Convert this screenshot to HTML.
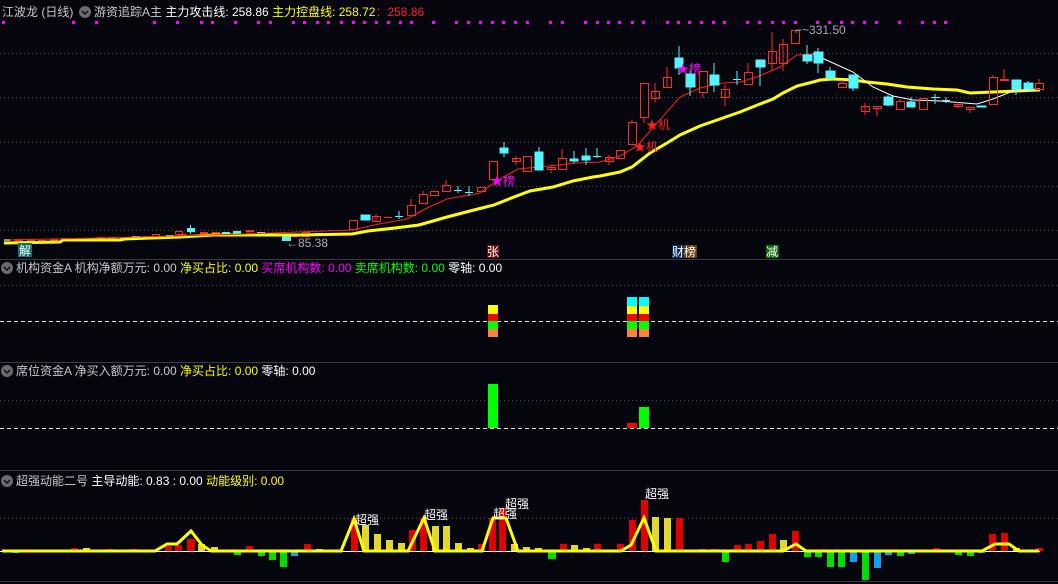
<!DOCTYPE html>
<html><head><meta charset="utf-8">
<style>
html,body{margin:0;padding:0;background:#05050e;width:1058px;height:584px;overflow:hidden}
svg{display:block}
text{font-family:"Liberation Sans","Noto Sans CJK SC",sans-serif;font-size:12px}
</style></head><body>
<svg width="1058" height="584" viewBox="0 0 1058 584" xmlns="http://www.w3.org/2000/svg">
<rect width="1058" height="584" fill="#05050e"/>
<!-- separators -->
<g stroke="#3a3a3e" stroke-width="1">
<line x1="0" y1="259.5" x2="1058" y2="259.5"/>
<line x1="0" y1="362.5" x2="1058" y2="362.5"/>
<line x1="0" y1="470.5" x2="1058" y2="470.5"/>
<line x1="0" y1="581.5" x2="1058" y2="581.5"/>
</g>
<!-- grid -->
<g stroke="#4a4a55" stroke-width="1" stroke-dasharray="1,3">
<line x1="0" y1="53.5" x2="1058" y2="53.5"/>
<line x1="0" y1="97.5" x2="1058" y2="97.5"/>
<line x1="0" y1="142.5" x2="1058" y2="142.5"/>
<line x1="0" y1="186.5" x2="1058" y2="186.5"/>
<line x1="0" y1="230.5" x2="1058" y2="230.5"/>
<line x1="0" y1="285.5" x2="1058" y2="285.5"/>
<line x1="0" y1="400.5" x2="1058" y2="400.5"/>
<line x1="0" y1="518.5" x2="1058" y2="518.5"/>
</g>
<g stroke="#e0e0e0" stroke-width="1" stroke-dasharray="4,3">
<line x1="0" y1="321.5" x2="1058" y2="321.5"/>
<line x1="0" y1="428.5" x2="1058" y2="428.5"/>
</g>
<!-- magenta dots -->
<g fill="#ff00ff">
<rect x="2" y="21" width="3" height="3"/><rect x="72" y="21" width="3" height="3"/><rect x="95" y="21" width="3" height="3"/><rect x="153" y="21" width="3" height="3"/><rect x="176" y="21" width="3" height="3"/><rect x="200" y="21" width="3" height="3"/><rect x="211" y="21" width="3" height="3"/><rect x="234" y="21" width="3" height="3"/><rect x="257" y="21" width="3" height="3"/><rect x="269" y="21" width="3" height="3"/><rect x="292" y="21" width="3" height="3"/><rect x="303" y="21" width="3" height="3"/><rect x="316" y="21" width="3" height="3"/><rect x="327" y="21" width="3" height="3"/><rect x="340" y="21" width="3" height="3"/><rect x="352" y="21" width="3" height="3"/><rect x="363" y="21" width="3" height="3"/><rect x="375" y="21" width="3" height="3"/><rect x="387" y="21" width="3" height="3"/><rect x="399" y="21" width="3" height="3"/><rect x="410" y="21" width="3" height="3"/><rect x="432" y="21" width="3" height="3"/><rect x="455" y="21" width="3" height="3"/><rect x="467" y="21" width="3" height="3"/><rect x="479" y="21" width="3" height="3"/><rect x="491" y="21" width="3" height="3"/><rect x="502" y="21" width="3" height="3"/><rect x="514" y="21" width="3" height="3"/><rect x="526" y="21" width="3" height="3"/><rect x="549" y="21" width="3" height="3"/><rect x="561" y="21" width="3" height="3"/><rect x="584" y="21" width="3" height="3"/><rect x="596" y="21" width="3" height="3"/><rect x="607" y="21" width="3" height="3"/><rect x="618" y="21" width="3" height="3"/><rect x="631" y="21" width="3" height="3"/><rect x="642" y="21" width="3" height="3"/><rect x="666" y="21" width="3" height="3"/><rect x="677" y="21" width="3" height="3"/><rect x="688" y="21" width="3" height="3"/><rect x="700" y="21" width="3" height="3"/><rect x="712" y="21" width="3" height="3"/><rect x="723" y="21" width="3" height="3"/><rect x="746" y="21" width="3" height="3"/><rect x="758" y="21" width="3" height="3"/><rect x="771" y="21" width="3" height="3"/><rect x="782" y="21" width="3" height="3"/><rect x="794" y="21" width="3" height="3"/><rect x="816" y="21" width="3" height="3"/><rect x="828" y="21" width="3" height="3"/><rect x="840" y="21" width="3" height="3"/><rect x="851" y="21" width="3" height="3"/><rect x="863" y="21" width="3" height="3"/><rect x="875" y="21" width="3" height="3"/><rect x="898" y="21" width="3" height="3"/><rect x="921" y="21" width="3" height="3"/><rect x="933" y="21" width="3" height="3"/><rect x="944" y="21" width="3" height="3"/>
</g>
<!-- early small candles -->
<g fill="#ff2a2a">
<rect x="15" y="239" width="8" height="2"/><rect x="27" y="239" width="8" height="2"/><rect x="38" y="240" width="8" height="2"/><rect x="50" y="239" width="8" height="2"/><rect x="62" y="238" width="8" height="2"/><rect x="73" y="238" width="8" height="2"/><rect x="97" y="237" width="8" height="2"/><rect x="108" y="237" width="8" height="2"/><rect x="120" y="237" width="8" height="2"/><rect x="143" y="236" width="8" height="2"/><rect x="155" y="236" width="8" height="2"/><rect x="178" y="234" width="8" height="2"/><rect x="200" y="232" width="8" height="3"/><rect x="212" y="232" width="8" height="2"/><rect x="246" y="230" width="8" height="2"/>
</g>
<g fill="#54f5ff">
<rect x="4" y="239" width="6" height="2"/><rect x="85" y="238" width="8" height="1"/><rect x="132" y="236" width="8" height="2"/><rect x="166" y="235" width="8" height="1"/><rect x="187" y="228" width="8" height="4"/><rect x="190" y="225" width="1" height="9"/><rect x="222" y="232" width="8" height="2"/><rect x="233" y="231" width="8" height="3"/><rect x="257" y="232" width="8" height="2"/><rect x="268" y="235" width="8" height="1"/><rect x="282" y="236" width="9" height="5"/><rect x="315" y="233" width="8" height="1"/><rect x="338" y="233" width="8" height="1"/>
</g>
<g fill="none" stroke="#ff2a2a" stroke-width="1">
<rect x="152.5" y="234.5" width="7" height="3"/><rect x="175.5" y="231.5" width="7" height="3"/><rect x="302.5" y="232.5" width="7" height="4"/><rect x="246.5" y="233.5" width="7" height="2"/><rect x="291.5" y="234.5" width="7" height="2"/>
</g>
<!-- moving averages -->
<polyline fill="none" stroke="#ffff00" stroke-width="3" points="4,243 60,242 63,240 120,240 125,239 180,237 213,235 300,235 352,234 368,231 395,228 419,225 447,217 474,210 494,205 514,197 530,191 553,187 573,181 593,177 600,176 620,172 632,167 650,153 667,143 680,135 700,126 720,119 740,112 760,104 773,99 783,93 797,86 813,82 820,80 833,79 853,80 867,82 887,84 907,87 933,89 957,90 970,93 993,92 1017,91 1040,90"/>
<polyline fill="none" stroke="#ff1e1e" stroke-width="1" points="4,240 99,238 245,234 352,230 379,224 407,219 427,208 447,199 480,193 498,180 518,169 538,167 577,163 600,162 620,156 637,146 680,97 700,88 723,83 740,82 757,77 780,67 797,55 813,54"/>
<polyline fill="none" stroke="#ffffff" stroke-width="1" points="813,54 833,63 853,72 873,87 893,96 913,100 940,101 977,104 993,99 1013,91 1040,89"/>
<!-- red candles (hollow) -->
<g fill="none" stroke="#ff2a2a" stroke-width="1">
<rect x="349.5" y="220.5" width="8" height="9"/>
<line x1="376" y1="214" x2="376" y2="222"/><rect x="372.5" y="216.5" width="8" height="5"/>
<line x1="384" y1="217.5" x2="392" y2="217.5"/>
<line x1="411" y1="199" x2="411" y2="205"/><rect x="407.5" y="205.5" width="8" height="10"/>
<line x1="423" y1="191" x2="423" y2="194"/><rect x="419.5" y="194.5" width="8" height="9"/>
<rect x="430.5" y="191.5" width="8" height="4"/>
<line x1="446" y1="180" x2="446" y2="185"/><rect x="442.5" y="185.5" width="8" height="6"/>
<rect x="477.5" y="187.5" width="8" height="4"/>
<rect x="489.5" y="161.5" width="8" height="18"/>
<line x1="516" y1="156" x2="516" y2="165"/><rect x="512.5" y="158.5" width="8" height="3"/>
<rect x="523.5" y="156.5" width="8" height="15"/>
<line x1="551" y1="166" x2="551" y2="173"/><rect x="547.5" y="167.5" width="8" height="2"/>
<line x1="562" y1="149" x2="562" y2="158"/><rect x="558.5" y="158.5" width="8" height="11"/>
<line x1="609" y1="155" x2="609" y2="165"/><rect x="605.5" y="157.5" width="8" height="4"/>
<rect x="616.5" y="150.5" width="8" height="8"/>
<line x1="632" y1="120" x2="632" y2="122"/><rect x="628.5" y="122.5" width="8" height="22"/>
<line x1="644" y1="117" x2="644" y2="123"/><rect x="640.5" y="83.5" width="8" height="34"/>
<line x1="655" y1="83" x2="655" y2="102"/><rect x="651.5" y="91.5" width="8" height="7"/>
<line x1="667" y1="67" x2="667" y2="88"/><rect x="663.5" y="77.5" width="8" height="10"/>
<line x1="703" y1="92" x2="703" y2="98"/><rect x="699.5" y="71.5" width="8" height="21"/>
<line x1="725" y1="85" x2="725" y2="106"/><rect x="721.5" y="89.5" width="8" height="8"/>
<line x1="748" y1="63" x2="748" y2="72"/><rect x="744.5" y="72.5" width="8" height="12"/>
<line x1="772" y1="32" x2="772" y2="70"/><rect x="768.5" y="51.5" width="8" height="12"/>
<line x1="783" y1="39" x2="783" y2="71"/><rect x="779.5" y="44.5" width="8" height="19"/>
<rect x="791.5" y="30.5" width="8" height="13"/>
<line x1="842" y1="80" x2="842" y2="83"/><rect x="838.5" y="83.5" width="8" height="4"/>
<line x1="865" y1="103" x2="865" y2="115"/><rect x="861.5" y="106.5" width="8" height="5"/>
<line x1="877" y1="108" x2="877" y2="116"/><rect x="873.5" y="106.5" width="8" height="2"/>
<line x1="900" y1="99" x2="900" y2="101"/><rect x="896.5" y="101.5" width="8" height="8"/>
<rect x="919.5" y="98.5" width="8" height="11"/>
<line x1="958" y1="102" x2="958" y2="108"/><rect x="954.5" y="104.5" width="8" height="2"/>
<line x1="970" y1="109" x2="970" y2="113"/><rect x="966.5" y="107.5" width="8" height="2"/>
<line x1="993" y1="75" x2="993" y2="77"/><rect x="989.5" y="77.5" width="8" height="27"/>
<line x1="1004" y1="69" x2="1004" y2="80"/><rect x="1000.5" y="79.5" width="8" height="1"/>
<line x1="1039" y1="79" x2="1039" y2="83"/><rect x="1035.5" y="83.5" width="8" height="6"/>
</g>
<!-- cyan candles -->
<g fill="#54f5ff" stroke="#54f5ff" stroke-width="1">
<rect x="361" y="215" width="9" height="5"/>
<line x1="399" y1="211" x2="399" y2="219"/><line x1="395" y1="216.5" x2="403" y2="216.5"/>
<line x1="458" y1="186" x2="458" y2="193"/><line x1="454" y1="190.5" x2="462" y2="190.5"/>
<line x1="469" y1="186" x2="469" y2="196"/><line x1="465" y1="192.5" x2="473" y2="192.5"/>
<line x1="504" y1="142" x2="504" y2="157"/><rect x="500" y="148" width="8" height="5"/>
<line x1="539" y1="147" x2="539" y2="170"/><rect x="535" y="152" width="8" height="18"/>
<line x1="574" y1="151" x2="574" y2="163"/><rect x="570" y="159" width="8" height="2"/>
<line x1="586" y1="148" x2="586" y2="165"/><rect x="582" y="156" width="8" height="4"/>
<line x1="597" y1="148" x2="597" y2="158"/><line x1="593" y1="156.5" x2="601" y2="156.5"/>
<line x1="679" y1="46" x2="679" y2="75"/><rect x="675" y="58" width="8" height="10"/>
<line x1="690" y1="70" x2="690" y2="96"/><rect x="686" y="74" width="9" height="13"/>
<line x1="714" y1="63" x2="714" y2="92"/><rect x="710" y="75" width="9" height="10"/>
<line x1="737" y1="71" x2="737" y2="85"/><line x1="733" y1="79.5" x2="741" y2="79.5"/>
<line x1="760" y1="60" x2="760" y2="86"/><rect x="756" y="60" width="9" height="7"/>
<line x1="807" y1="45" x2="807" y2="64"/><rect x="803" y="55" width="9" height="6"/>
<line x1="818" y1="48" x2="818" y2="73"/><rect x="814" y="52" width="9" height="11"/>
<line x1="830" y1="67" x2="830" y2="78"/><rect x="826" y="71" width="9" height="7"/>
<line x1="853" y1="75" x2="853" y2="91"/><rect x="849" y="75" width="9" height="13"/>
<line x1="888" y1="95" x2="888" y2="106"/><rect x="884" y="97" width="9" height="8"/>
<line x1="911" y1="97" x2="911" y2="107"/><rect x="907" y="102" width="8" height="5"/>
<line x1="935" y1="94" x2="935" y2="104"/><line x1="931" y1="97.5" x2="940" y2="97.5"/>
<line x1="946" y1="97" x2="946" y2="103"/><line x1="942" y1="100.5" x2="950" y2="100.5"/>
<rect x="977" y="106" width="9" height="1"/>
<line x1="1016" y1="80" x2="1016" y2="95"/><rect x="1012" y="80" width="9" height="9"/>
<line x1="1028" y1="81" x2="1028" y2="89"/><rect x="1024" y="83" width="9" height="6"/>
</g>
<!-- annotations -->
<text x="491" y="185" fill="#ff00ff" font-size="12">★榜</text>
<text x="677" y="73" fill="#ff00ff" font-size="12">★榜</text>
<text x="634" y="151" fill="#ff2020" font-size="12">★机</text>
<text x="646" y="129" fill="#ff2020" font-size="12">★机</text>
<text x="286" y="247" fill="#a8a8b0" font-size="12">←85.38</text>
<text x="795" y="34" fill="#a8a8b0" font-size="12">⌐~331.50</text>
<rect x="18" y="243" width="14" height="14" fill="#0e7070"/><text x="19" y="255" fill="#fff" font-size="12">解</text>
<rect x="487" y="245" width="12" height="13" fill="#6e0c0c"/><text x="487" y="256" fill="#fff" font-size="12">张</text>
<rect x="672" y="245" width="12" height="13" fill="#0c2d5a"/><text x="672" y="256" fill="#fff" font-size="12">财</text>
<rect x="684" y="245" width="13" height="13" fill="#6a3c08"/><text x="684" y="256" fill="#fff" font-size="12">榜</text>
<rect x="766" y="245" width="13" height="13" fill="#0c6a0c"/><text x="766" y="256" fill="#fff" font-size="12">减</text>
<!-- headers -->
<text x="2" y="16" fill="#c8c8cc" font-size="13">江波龙 (日线)</text>
<circle cx="85" cy="12" r="6" fill="#6a6a70"/><polyline points="82,11 85,14 88,11" fill="none" stroke="#111" stroke-width="1.5"/>
<text x="94" y="16" font-size="13"><tspan fill="#c8c8cc">游资追踪A主 </tspan><tspan fill="#ffffff">主力攻击线: 258.86 </tspan><tspan fill="#ffff00">主力控盘线: 258.72</tspan><tspan fill="#ff2020">：258.86</tspan></text>
<circle cx="7" cy="268" r="6" fill="#6a6a70"/><polyline points="4,267 7,270 10,267" fill="none" stroke="#111" stroke-width="1.5"/>
<text x="16" y="272" font-size="12"><tspan fill="#c8c8cc">机构资金A 机构净额万元: 0.00 </tspan><tspan fill="#ffff00">净买占比: 0.00 </tspan><tspan fill="#ff00ff">买席机构数: 0.00 </tspan><tspan fill="#00ff00">卖席机构数: 0.00 </tspan><tspan fill="#ffffff">零轴: 0.00</tspan></text>
<circle cx="7" cy="371" r="6" fill="#6a6a70"/><polyline points="4,370 7,373 10,370" fill="none" stroke="#111" stroke-width="1.5"/>
<text x="16" y="375" font-size="12"><tspan fill="#c8c8cc">席位资金A 净买入额万元: 0.00 </tspan><tspan fill="#ffff00">净买占比: 0.00 </tspan><tspan fill="#ffffff">零轴: 0.00</tspan></text>
<circle cx="7" cy="481" r="6" fill="#6a6a70"/><polyline points="4,480 7,483 10,480" fill="none" stroke="#111" stroke-width="1.5"/>
<text x="16" y="485" font-size="12"><tspan fill="#c8c8cc">超强动能二号 </tspan><tspan fill="#ffffff">主导动能: 0.83 : 0.00 </tspan><tspan fill="#ffff00">动能级别: 0.00</tspan></text>
<!-- panel 2 blocks -->
<g>
<rect x="488" y="305" width="10" height="9" fill="#ffff00"/><rect x="488" y="314" width="10" height="7" fill="#ff0000"/><rect x="488" y="321" width="10" height="8" fill="#00ff00"/><rect x="488" y="329" width="10" height="8" fill="#ff8040"/>
<rect x="627" y="297" width="10" height="9" fill="#00ffff"/><rect x="627" y="306" width="10" height="8" fill="#ffff00"/><rect x="627" y="314" width="10" height="7" fill="#ff0000"/><rect x="627" y="321" width="10" height="8" fill="#00ff00"/><rect x="627" y="329" width="10" height="8" fill="#ff8040"/>
<rect x="639" y="297" width="10" height="9" fill="#00ffff"/><rect x="639" y="306" width="10" height="8" fill="#ffff00"/><rect x="639" y="314" width="10" height="7" fill="#ff0000"/><rect x="639" y="321" width="10" height="8" fill="#00ff00"/><rect x="639" y="329" width="10" height="8" fill="#ff8040"/>
</g>
<!-- panel 3 bars -->
<rect x="488" y="384" width="10" height="44" fill="#00ff00"/>
<rect x="627" y="423" width="10" height="5" fill="#ff0000"/>
<rect x="639" y="407" width="10" height="21" fill="#00ff00"/>
<!-- panel 4 bars -->
<line x1="0" y1="551.5" x2="1040" y2="551.5" stroke="#ffffff" stroke-width="1"/>
<g fill="#e00000">
<rect x="71" y="548" width="7" height="3"/><rect x="106" y="549" width="7" height="2"/><rect x="130" y="549" width="7" height="2"/><rect x="165" y="546" width="7" height="5"/><rect x="175" y="545" width="7" height="6"/><rect x="187" y="539" width="8" height="12"/><rect x="246" y="546" width="7" height="5"/><rect x="304" y="544" width="7" height="7"/><rect x="351" y="518" width="7" height="33"/><rect x="409" y="530" width="7" height="21"/><rect x="420" y="518" width="7" height="33"/><rect x="478" y="544" width="7" height="7"/><rect x="489" y="518" width="7" height="33"/><rect x="499" y="508" width="7" height="43"/><rect x="560" y="544" width="7" height="7"/><rect x="594" y="544" width="7" height="7"/><rect x="617" y="544" width="7" height="7"/><rect x="629" y="520" width="7" height="31"/><rect x="641" y="500" width="7" height="51"/><rect x="676" y="518" width="7" height="33"/><rect x="699" y="549" width="7" height="2"/><rect x="711" y="549" width="7" height="2"/><rect x="734" y="545" width="7" height="6"/><rect x="745" y="544" width="7" height="7"/><rect x="757" y="541" width="7" height="10"/><rect x="769" y="534" width="7" height="17"/><rect x="792" y="531" width="7" height="20"/><rect x="933" y="548" width="7" height="3"/><rect x="989" y="534" width="7" height="17"/><rect x="1001" y="533" width="7" height="18"/><rect x="1036" y="548" width="7" height="3"/>
</g>
<g fill="#e0d830">
<rect x="83" y="548" width="7" height="3"/><rect x="198" y="544" width="7" height="7"/><rect x="211" y="547" width="7" height="4"/><rect x="316" y="549" width="7" height="2"/><rect x="362" y="525" width="7" height="26"/><rect x="374" y="534" width="7" height="17"/><rect x="386" y="540" width="7" height="11"/><rect x="398" y="543" width="7" height="8"/><rect x="432" y="526" width="7" height="25"/><rect x="443" y="526" width="7" height="25"/><rect x="455" y="543" width="7" height="8"/><rect x="467" y="548" width="7" height="3"/><rect x="511" y="544" width="7" height="7"/><rect x="523" y="547" width="7" height="4"/><rect x="535" y="548" width="7" height="3"/><rect x="571" y="545" width="7" height="6"/><rect x="583" y="548" width="7" height="3"/><rect x="652" y="517" width="7" height="34"/><rect x="664" y="518" width="7" height="33"/><rect x="780" y="540" width="7" height="11"/><rect x="1013" y="548" width="7" height="3"/>
</g>
<g fill="#00dd00">
<rect x="234" y="551" width="7" height="4"/><rect x="258" y="551" width="7" height="5"/><rect x="269" y="551" width="7" height="9"/><rect x="280" y="551" width="7" height="16"/><rect x="548" y="551" width="8" height="8"/><rect x="722" y="551" width="7" height="11"/><rect x="804" y="551" width="7" height="6"/><rect x="815" y="551" width="7" height="6"/><rect x="827" y="551" width="7" height="16"/><rect x="838" y="551" width="7" height="16"/><rect x="862" y="551" width="7" height="29"/><rect x="897" y="551" width="7" height="5"/><rect x="955" y="551" width="7" height="4"/><rect x="967" y="551" width="7" height="5"/>
</g>
<g fill="#10a0f0">
<rect x="12" y="551" width="7" height="2"/><rect x="291" y="551" width="7" height="5"/><rect x="850" y="551" width="7" height="11"/><rect x="874" y="551" width="7" height="17"/><rect x="885" y="551" width="7" height="4"/><rect x="908" y="551" width="7" height="3"/><rect x="978" y="551" width="7" height="2"/>
</g>
<polyline fill="none" stroke="#ffff00" stroke-width="3" points="2,551 155,551 167,544 177,544 191,531 202,545 211,551 341,551 354,519 364,551 408,551 424,518 435,551 482,551 493,518 506,518 518,551 621,551 631,545 644,518 656,551 783,551 796,544 806,551 982,551 995,544 1009,544 1019,551 1039,551"/>
<g fill="#ffffff" font-size="11">
<text x="355" y="524">超强</text>
<text x="424" y="519">超强</text>
<text x="493" y="518">超强</text>
<text x="505" y="508">超强</text>
<text x="645" y="498" font-size="8">超强</text>
</g>
</svg>
</body></html>
